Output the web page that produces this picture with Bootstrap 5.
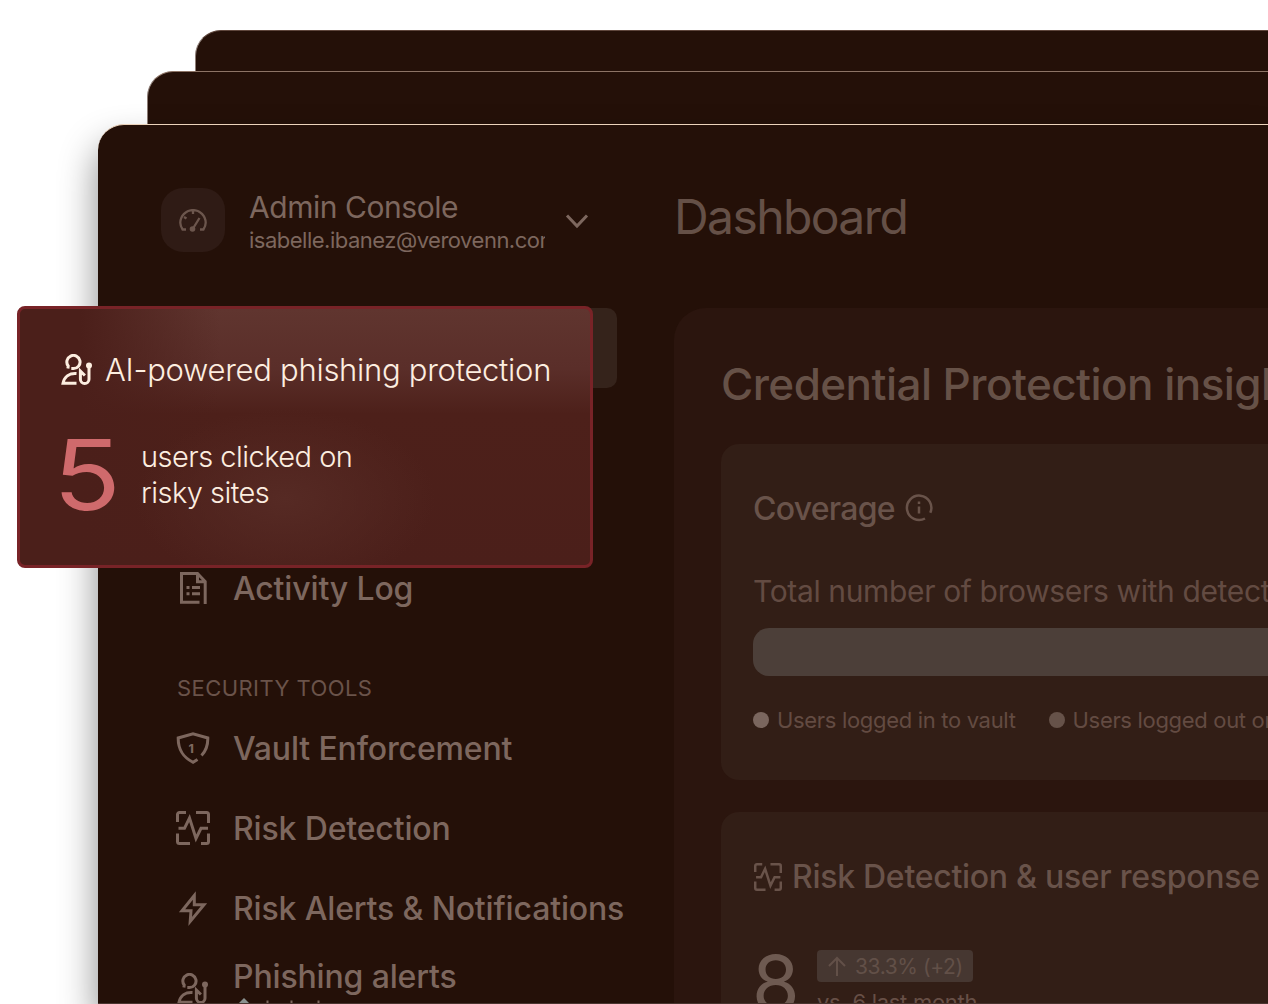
<!DOCTYPE html>
<html lang="en">
<head>
<meta charset="utf-8">
<title>Admin Console</title>
<link href="https://cdn.jsdelivr.net/npm/bootstrap@5.3.0/dist/css/bootstrap.min.css" rel="stylesheet">
<style>
body{width:1268px;height:1004px;overflow:hidden;background:#fff;font-family:Inter,"Liberation Sans",sans-serif;color:#7d675e;line-height:1}
svg{display:block;flex:none;fill:none;stroke:currentColor;stroke-width:3;stroke-miterlimit:10}
.stage{width:1268px;height:1004px;padding-top:30px;overflow:hidden}
.sheet{background:#241008;border-top:1px solid #5f463c;border-left:1px solid #8f7f78;border-top-left-radius:26px}
.sheet-a{margin-left:195px;height:41px}
.sheet-b{margin-left:147px;height:53px;border-top-color:#8d7466}
.console{margin-left:98px;height:880px;background:#241008;border-top:1px solid #ecd3bb;border-bottom:1px solid #49352f;border-top-left-radius:26px;box-shadow:-2px 20px 36px rgba(0,0,0,.42);overflow:hidden}
.side{width:576px;flex:none;padding:63px 57px 0 63px}
.avatar{width:64px;height:64px;border-radius:22px;background:#2f1b15;color:#6c564d}
.who{width:296px;height:68px;margin-left:24px;overflow:hidden;white-space:nowrap}
.who-name{font-size:30px;line-height:36px;margin-top:1px;letter-spacing:-.45px}
.who-mail{font-size:22px;line-height:30px;letter-spacing:-.5px}
.chev{margin:24px 0 0 20px}
.item{height:80px;padding-left:15px;white-space:nowrap;font-size:32px;font-weight:450}
.item .pic{width:34px;margin-right:23px;display:flex;justify-content:center;flex:none}
.item .txt{position:relative;top:1px;letter-spacing:-.15px}
.item-on{background:#35231b;border-radius:10px;margin-top:52px;margin-bottom:160px}
.label-sec{font-size:22px;line-height:40px;padding-left:16px;margin-top:40px;color:#6a534a;letter-spacing:.43px}
.main-col{width:594px;flex:none;white-space:nowrap}
.h-dash{font-size:48px;line-height:60px;margin:62px 0 61px;color:#655047;font-weight:400;letter-spacing:-1.6px}
.panel{width:640px;height:760px;border-radius:32px 0 0 0;background:#2b150e;padding-left:47px}
.h-cred{font-size:44px;line-height:60px;padding-top:46px;margin-bottom:30px;color:#665147;font-weight:450;letter-spacing:-.55px}
.box{background:#321e16;border-radius:18px;padding:0 32px;color:#674f46;width:640px}
.box-cov{height:336px;margin-bottom:32px;padding-top:45px}
.box-risk{height:300px;padding-top:45px}
.t-32{font-size:32px;line-height:40px;color:#69534a;font-weight:450}
.cov{letter-spacing:-.75px}
.risk{letter-spacing:-.28px;margin-left:9px}
.t-total{font-size:30px;line-height:40px;margin-top:42px;margin-bottom:17px;color:#634b42;letter-spacing:-.36px}
.meter{height:48px;border-radius:16px;background:#4c3f39}
.legend-row{font-size:22px;line-height:32px;margin-top:28px;color:#634b42;letter-spacing:-.32px}
.dot{width:16px;height:16px;border-radius:50%;background:#7a665e;margin-right:8px}
.dot-b{background:#665249;margin-left:33px}
.stat{padding-top:53px}
.num8{font-size:77px;line-height:60px;width:64px;margin-top:3px;color:#6e5a51;margin-left:-1px;margin-right:1px}
.delta{background:#463731;border-radius:4px;width:156px;height:32px;font-size:21px;padding-left:11px;color:#625048;letter-spacing:-.4px}
.delta span{margin-left:9px}
.vs{font-size:22px;line-height:30px;margin-top:5px;letter-spacing:-.28px}
.alert-pop{position:absolute;left:17px;top:306px;width:576px;height:262px;border:3px solid #782327;border-radius:8px;color:#fdeee0;padding:42px 0 0 41px;white-space:nowrap;
background:radial-gradient(ellipse 150px 90px at 265px 190px,#562a24 0%,rgba(86,42,36,0) 100%),linear-gradient(90deg,#4b1f1a 60px,rgba(75,31,26,0) 200px),linear-gradient(180deg,#60352f 0,#5a2e29 60px,#4d201a 105px,#4b1f1a 100%)}
.pop-title{font-size:31px;line-height:38px;font-weight:300;letter-spacing:-.28px}
.pop-title span{margin-left:12px}
.pop-row{margin-top:46px}
.pop-five{font-size:98px;line-height:80px;width:80px;color:#cf6a6c}
.pop-five span{display:inline-block;transform:translate(-8px,0) scaleX(1.14);transform-origin:0 50%}
.pop-text{font-size:29px;line-height:36px;font-weight:300;letter-spacing:-.52px}
</style>
</head>
<body>
<svg width="0" height="0" class="position-absolute">
<symbol id="hook" viewBox="0 0 32 32"><path d="M6.900 14.500L7.200 12A6.600 6.600 0 1 1 12.500 14.600H10.300M15.500 19.500C8.500 19 3.200 22.500 2 29.300H15.500M28 12V25.200a4.300 4.300 0 0 1-8.600 0V17l4.500 4.500"/><circle cx="28" cy="11.500" r="3" fill="currentColor" stroke="none"/></symbol>
<symbol id="pulse" viewBox="0 0 34 34"><path d="M10 1.500H3.500a2 2 0 0 0-2 2V11M20 1.500h10.500a2 2 0 0 1 2 2V12M32.500 22.500v8a2 2 0 0 1-2 2H25M14 32.500H3.500a2 2 0 0 1-2-2V22.500M2.500 17.300H8.500L13.500 7 20 27.500 25 17.300H32"/></symbol>
</svg>
<div class="stage position-relative">
  <div class="sheet sheet-a"></div>
  <div class="sheet sheet-b"></div>
  <div class="console d-flex position-relative">
    <aside class="side">
      <div class="d-flex">
        <div class="avatar d-flex align-items-center justify-content-center"><svg width="28" height="23" viewBox="0 0 28 23" style="stroke-width:2.3"><path d="M7 20.500H3.600C2.300 18.500 1.300 16.300 1.300 13.800a12.700 12.700 0 0 1 25.400 0c0 2.500-1 4.700-2.300 6.700H21M14 1v4M5 8l2.500 1.500M14 19.500L20.500 9"/><circle cx="13.500" cy="20" r="2.800" fill="currentColor" stroke="none"/></svg></div>
        <div class="who"><div class="who-name">Admin Console</div><div class="who-mail">isabelle.ibanez@verovenn.com</div></div>
        <svg class="chev" width="24" height="18" viewBox="0 0 24 18"><path d="M2 3.500l10 10.500L22 3.500"/></svg>
      </div>
      <nav>
        <div class="item item-on"></div>
        <div class="item d-flex align-items-center"><span class="pic"><svg width="27" height="32" viewBox="0 0 27 32"><path d="M19.500 30.300H1.500V1.500H17.500L25.200 9.500V32M17.500 1.500V9.800H25M12 15.500h8M12 21.800h8M6.500 15.500h3M6.500 21.800h3"/></svg></span><span class="txt">Activity Log</span></div>
        <div class="label-sec">SECURITY TOOLS</div>
        <div class="item d-flex align-items-center"><span class="pic"><svg width="34" height="32" viewBox="0 0 34 32"><path d="M25.500 23.500C29.500 19.500 32 14 31.800 6L17 1.800 2.200 6C2 19 8 25.500 17 30.300L21.500 27.500"/><text x="12.500" y="20.500" font-size="12" font-weight="800" fill="currentColor" stroke="none">1</text></svg></span><span class="txt">Vault Enforcement</span></div>
        <div class="item d-flex align-items-center"><span class="pic"><svg width="34" height="34"><use href="#pulse"/></svg></span><span class="txt">Risk Detection</span></div>
        <div class="item d-flex align-items-center"><span class="pic"><svg width="30" height="38" viewBox="0 0 30 38"><path d="M16.300 6.500L4 21.800H13L12.200 32.500 26 15.800H16.300z"/></svg></span><span class="txt">Risk Alerts &amp; Notifications</span></div>
        <div class="d-flex item">
          <span class="pic pt-4"><svg width="32" height="32" style="margin-top:1px"><use href="#hook"/></svg></span>
          <div><div class="txt" style="line-height:56px">Phishing alerts</div>
          <svg style="margin-top:-7px" width="100" height="14" viewBox="0 0 100 14"><path d="M11 1L19 9 11 17 3 9z" fill="#8a918f" stroke="none"/><path d="M34.500 3.500V14M58.500 3.500V14M85.500 3.500V14" style="stroke-width:2"/></svg></div>
        </div>
      </nav>
    </aside>
    <main class="main-col">
      <h1 class="h-dash">Dashboard</h1>
      <section class="panel">
        <h2 class="h-cred">Credential Protection insights</h2>
        <div class="box box-cov">
          <div class="d-flex align-items-center t-32"><span class="cov">Coverage</span><svg style="margin:-2px 0 0 9px" width="30" height="30" viewBox="0 0 30 30"><path d="M21 25.500A12.200 12.200 0 1 1 26.300 19.700M15 13.500v7M15 8.500v2.500" style="stroke-width:2.5"/></svg></div>
          <div class="t-total">Total number of browsers with detected</div>
          <div class="meter"></div>
          <div class="legend-row d-flex align-items-center"><i class="dot"></i>Users logged in to vault<i class="dot dot-b"></i>Users logged out or</div>
        </div>
        <div class="box box-risk">
          <div class="d-flex align-items-center t-32"><svg width="30" height="28"><use href="#pulse"/></svg><span class="risk">Risk Detection &amp; user response</span></div>
          <div class="d-flex stat">
            <div class="num8">8</div>
            <div><div class="delta d-flex align-items-center"><svg width="18" height="20" viewBox="0 0 18 20" style="stroke-width:2"><path d="M9 20V2M1 10L9 2l8 8"/></svg><span>33.3% (+2)</span></div><div class="vs">vs. 6 last month</div></div>
          </div>
        </div>
      </section>
    </main>
  </div>
  <div class="alert-pop">
    <div class="d-flex align-items-center pop-title"><svg width="32" height="32"><use href="#hook"/></svg><span>AI-powered phishing protection</span></div>
    <div class="d-flex align-items-center pop-row"><div class="pop-five"><span>5</span></div><div class="pop-text">users clicked on<br>risky sites</div></div>
  </div>
</div>
<script src="https://cdn.jsdelivr.net/npm/bootstrap@5.3.0/dist/js/bootstrap.bundle.min.js"></script>
</body>
</html>
